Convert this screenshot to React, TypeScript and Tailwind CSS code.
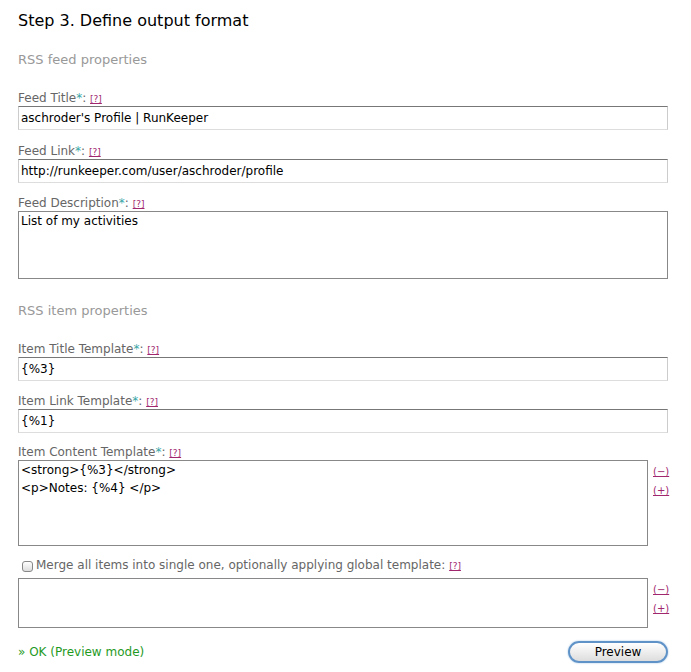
const font = "font-['DejaVu_Sans',sans-serif]"

function Label({ text }: { text: string }) {
  return (
    <div className="text-[12px] leading-[13px] text-[#666]">
      {text}
      <span className="text-[#3aa6a6]">*</span>:{" "}
      <a href="#" className="text-[9px] text-[#a0266e] underline">[?]</a>
    </div>
  )
}

function Input({ value }: { value: string }) {
  return (
    <div className="h-[24px] border border-[#ccc] border-t-[#777] border-b-[#ddd] bg-white px-[2px] text-[12px] leading-[22px] text-black">
      {value}
    </div>
  )
}

function SideLinks() {
  return (
    <div className="flex flex-col gap-[4px] pt-[4px] text-[10px] text-[#a0266e]">
      <a href="#" className="underline">(−)</a>
      <a href="#" className="underline">(+)</a>
    </div>
  )
}

export default function App() {
  return (
    <div className={`${font} w-[691px] h-[672px] bg-white px-[18px] pt-[11px]`}>
      <h1 className="text-[16px] leading-[20px] text-black">Step 3. Define output format</h1>
      <h2 className="mt-[20px] text-[13px] leading-[18px] text-[#999]">RSS feed properties</h2>

      <div className="mt-[23px] w-[650px]">
        <Label text="Feed Title" />
        <Input value="aschroder's Profile | RunKeeper" />
      </div>
      <div className="mt-[15px] w-[650px]">
        <Label text="Feed Link" />
        <Input value="http://runkeeper.com/user/aschroder/profile" />
      </div>
      <div className="mt-[14px] w-[650px]">
        <Label text="Feed Description" />
        <div className="h-[68px] border border-[#888] bg-white px-[2px] text-[12px] leading-[18px]">
          List of my activities
        </div>
      </div>

      <h2 className="mt-[23px] text-[13px] leading-[18px] text-[#999]">RSS item properties</h2>

      <div className="mt-[23px] w-[650px]">
        <Label text="Item Title Template" />
        <Input value="{%3}" />
      </div>
      <div className="mt-[14px] w-[650px]">
        <Label text="Item Link Template" />
        <Input value="{%1}" />
      </div>
      <div className="mt-[13px]">
        <Label text="Item Content Template" />
        <div className="flex gap-[5px]">
          <div className="h-[86px] w-[630px] border border-[#888] bg-white px-[2px] text-[12px] leading-[18px] whitespace-pre">
            {"<strong>{%3}</strong>\n<p>Notes: {%4} </p>"}
          </div>
          <SideLinks />
        </div>
      </div>

      <div className="mt-[12px] flex items-center gap-[3px] pl-[4px] text-[12px] leading-[15px] text-[#666]">
        <span className="inline-block h-[11px] w-[11px] rounded-[3px] border border-[#888] bg-gradient-to-b from-white to-[#ddd]" />
        <span>
          Merge all items into single one, optionally applying global template:{" "}
          <a href="#" className="text-[9px] text-[#a0266e] underline">[?]</a>
        </span>
      </div>
      <div className="mt-[4px] flex gap-[5px]">
        <div className="h-[50px] w-[630px] border border-[#888] bg-white" />
        <SideLinks />
      </div>

      <div className="mt-[13px] flex w-[650px] items-center justify-between">
        <span className="text-[12px] text-[#1f9a1f]">» OK (Preview mode)</span>
        <button className="h-[22px] w-[100px] rounded-full border-2 border-[#5f93c8] bg-gradient-to-b from-white via-[#eee] to-[#ddd] text-[12px] leading-[16px] text-black shadow-[0_0_2px_#9cc0e4]">
          Preview
        </button>
      </div>
    </div>
  )
}
